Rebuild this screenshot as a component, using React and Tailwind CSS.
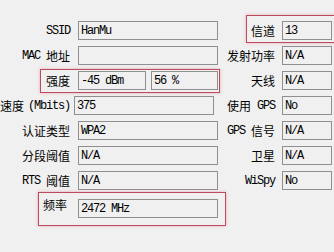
const latin = "font-['Liberation_Mono',monospace] text-[12px] tracking-[-1.2px]";
const cjk = "font-['Noto_Sans_CJK_SC',sans-serif] text-[12px]";
const redBox = "border border-[#bd4a5e] shadow-[0_0_3px_rgba(220,90,110,0.45)]";

function L({ children }) {
    return <span className={latin}>{children}</span>;
}

function C({ children }) {
    return <span className={cjk}>{children}</span>;
}

function Field({ value, className = "w-[140px]" }) {
    return (
        <div className={`${className} h-[19px] shrink-0 border border-[#8f8f8f] bg-[#f0f0f0] flex items-center pl-[2px] text-black`}>
            <L>{value}</L>
        </div>
    );
}

function Row({ label, children, highlight, labelClass = "gap-[6px]" }) {
    return (
        <div className="relative flex items-center h-[19px]">
            {highlight && <div className={`absolute left-[40px] -right-[2px] -top-[2px] -bottom-[3px] ${redBox}`} />}
            <div className={`w-[70px] shrink-0 flex justify-end items-center whitespace-nowrap text-black leading-none ${labelClass}`}>
                {label}
            </div>
            <div className="ml-[8px] flex gap-[5px]">{children}</div>
        </div>
    );
}

function RightRow({ label, value, highlight }) {
    return (
        <div className="relative flex items-center h-[19px]">
            {highlight && <div className={`absolute left-[28px] -right-[6px] -top-[6px] -bottom-[3px] ${redBox}`} />}
            <div className="flex-1 flex justify-end items-center whitespace-nowrap gap-[6px] text-black leading-none">
                {label}
            </div>
            <div className="ml-[7px] mr-[2px]">
                <Field value={value} className="w-[50px]" />
            </div>
        </div>
    );
}

export default function App() {
    return (
        <div className="w-[334px] h-[252px] bg-[#f0f0f0] flex pt-[21px] overflow-hidden">
            <div className="w-[218px] shrink-0 flex flex-col">
                <div className="flex flex-col gap-[6px]">
                    <Row label={<L>SSID</L>}>
                        <Field value="HanMu" />
                    </Row>
                    <Row label={<><L>MAC</L><C>地址</C></>}>
                        <Field value="" />
                    </Row>
                    <Row label={<C>强度</C>} highlight>
                        <Field value="-45 dBm" className="w-[68px]" />
                        <Field value="56 %" className="w-[67px]" />
                    </Row>
                    <Row label={<><C>速度</C><L>(Mbits)</L></>} labelClass="gap-[4px] -mr-[4px]">
                        <Field value="375" />
                    </Row>
                    <Row label={<C>认证类型</C>}>
                        <Field value="WPA2" />
                    </Row>
                    <Row label={<C>分段阈值</C>}>
                        <Field value="N/A" />
                    </Row>
                    <Row label={<><L>RTS</L><C>阈值</C></>}>
                        <Field value="N/A" />
                    </Row>
                </div>
                <div className={`ml-[38px] mt-[2px] w-[188px] h-[34px] flex items-start ${redBox}`}>
                    <div className="w-[39px] shrink-0 pl-[4px] pt-[3px] leading-[16px] text-black">
                        <C>频率</C>
                    </div>
                    <div className="mt-[6px]">
                        <Field value="2472 MHz" />
                    </div>
                </div>
            </div>
            <div className="flex-1 flex flex-col gap-[6px]">
                <RightRow label={<C>信道</C>} value="13" highlight />
                <RightRow label={<C>发射功率</C>} value="N/A" />
                <RightRow label={<C>天线</C>} value="N/A" />
                <RightRow label={<><C>使用</C><L>GPS</L></>} value="No" />
                <RightRow label={<><L>GPS</L><C>信号</C></>} value="N/A" />
                <RightRow label={<C>卫星</C>} value="N/A" />
                <RightRow label={<L>WiSpy</L>} value="No" />
            </div>
        </div>
    );
}
